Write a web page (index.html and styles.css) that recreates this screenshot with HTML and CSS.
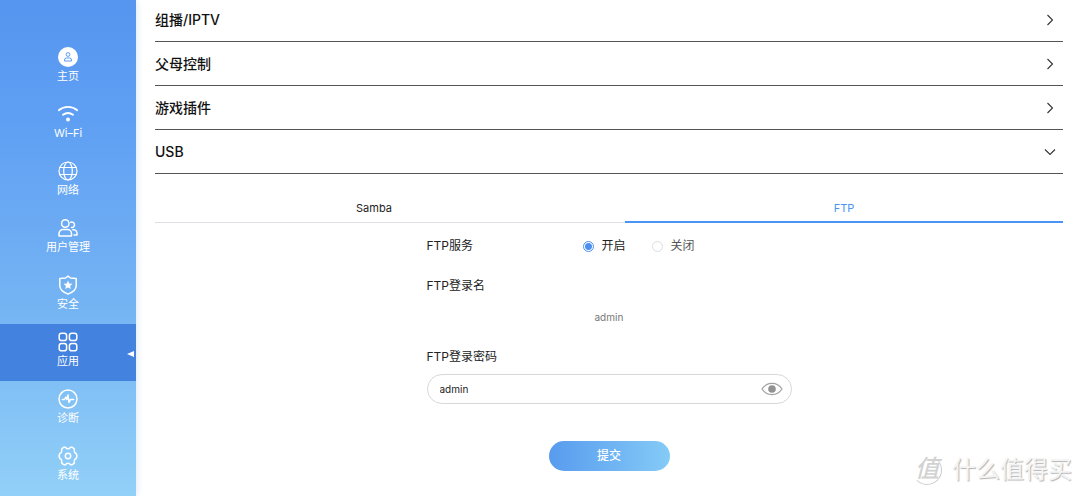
FILE: index.html
```html
<!DOCTYPE html>
<html lang="zh-CN">
<head>
<meta charset="utf-8">
<title>USB - FTP</title>
<link rel="stylesheet" href="styles.css">
</head>
<body>
<div class="layout">
  <nav class="sidebar">
    <a class="nav-item" href="#home">
      <svg class="nav-icon" viewBox="0 0 20 20"><circle cx="10" cy="10" r="10" fill="#fff"/><g fill="none" stroke="#5b9cf2" stroke-width="1"><circle cx="10" cy="7.500" r="1.900"/><path d="M6.500 14v-1a2 2 0 0 1 2-2h3a2 2 0 0 1 2 2v1z"/></g></svg>
      <span>主页</span>
    </a>
    <a class="nav-item" href="#wifi">
      <svg class="nav-icon" viewBox="0 0 20 20"><path d="M.8 6.200a14.500 14.500 0 0 1 18.400 0M5 10.800a8.500 8.500 0 0 1 10 0" fill="none" stroke="#fff" stroke-width="1.900" stroke-linecap="round"/><circle cx="10" cy="15.500" r="2" fill="#fff"/></svg>
      <span>Wi–Fi</span>
    </a>
    <a class="nav-item" href="#network">
      <svg class="nav-icon line" viewBox="0 0 20 20"><circle cx="10" cy="10" r="9"/><ellipse cx="10" cy="10" rx="4.300" ry="9"/><path d="M2 6.500h16M2 13.500h16" /></svg>
      <span>网络</span>
    </a>
    <a class="nav-item" href="#users">
      <svg class="nav-icon line thick" viewBox="0 0 20 20"><circle cx="7.300" cy="5.500" r="3.700"/><path d="M1 18v-2.500a4 4 0 0 1 4-4h4.500a4 4 0 0 1 4 4V18zM12.800 4.300a2.700 2.700 0 1 1 .8 5.200M14.800 11.700h.7a3.500 3.500 0 0 1 3.500 3.500V17h-3"/></svg>
      <span>用户管理</span>
    </a>
    <a class="nav-item" href="#security">
      <svg class="nav-icon line thick" viewBox="0 0 20 20"><path d="M10 1.200 12.500 3l5.700.6v7.200c0 4-4.200 6.800-8.200 8.300-4-1.500-8.200-4.300-8.200-8.300V3.600L7.500 3z"/><path d="m10 5.500 1.300 2.900 3.200.3-2.400 2.200.7 3.100-2.800-1.600L7.200 14l.7-3.100-2.400-2.200 3.200-.3z" fill="#fff" stroke="none"/></svg>
      <span>安全</span>
    </a>
    <a class="nav-item active" href="#apps" aria-current="page">
      <svg class="nav-icon line thick" viewBox="0 0 20 20"><rect x="1.200" y="1.200" width="7.400" height="7.400" rx="2.400"/><rect x="11.400" y="1.200" width="7.400" height="7.400" rx="2.400"/><rect x="1.200" y="11.400" width="7.400" height="7.400" rx="2.400"/><rect x="11.400" y="11.400" width="7.400" height="7.400" rx="2.400"/></svg>
      <span>应用</span>
    </a>
    <a class="nav-item" href="#diagnosis">
      <svg class="nav-icon line thick" viewBox="0 0 20 20"><circle cx="10" cy="10" r="9"/><path d="M4.300 10.500h2.200l1.300-2.300 1 2.300 1.200-4.500 1 7.500 1.400-3h3.300"/></svg>
      <span>诊断</span>
    </a>
    <a class="nav-item" href="#system">
      <svg class="nav-icon line thick" viewBox="0 0 20 20"><path d="M5.800 1.300h1.800a2.700 2.700 0 0 0 4.800 0h1.800l2 1.300.1 2.300a2.600 2.600 0 0 0 1.900 2.600l.8 2.500-.8 2.500a2.600 2.600 0 0 0-1.900 2.600l-.1 2.300-2 1.300h-1.800a2.700 2.700 0 0 0-4.800 0H5.800l-2-1.300-.1-2.300a2.600 2.600 0 0 0-1.900-2.600L1 10l.8-2.500a2.600 2.600 0 0 0 1.900-2.600l.1-2.300z"/><circle cx="10" cy="10" r="2.700"/></svg>
      <span>系统</span>
    </a>
  </nav>

  <main class="content">
    <div class="accordion">
      <button class="section" type="button" aria-expanded="false">组播/IPTV<svg class="chevron" viewBox="0 0 12 12"><path d="m3.500 1 5 5-5 5"/></svg></button>
      <button class="section" type="button" aria-expanded="false">父母控制<svg class="chevron" viewBox="0 0 12 12"><path d="m3.500 1 5 5-5 5"/></svg></button>
      <button class="section" type="button" aria-expanded="false">游戏插件<svg class="chevron" viewBox="0 0 12 12"><path d="m3.500 1 5 5-5 5"/></svg></button>
      <button class="section" type="button" aria-expanded="true">USB<svg class="chevron" viewBox="0 0 12 12"><path d="m1 3.500 5 5 5-5"/></svg></button>
    </div>

    <div class="tabs" role="tablist">
      <button class="tab" type="button" role="tab" aria-selected="false">Samba</button>
      <button class="tab selected" type="button" role="tab" aria-selected="true">FTP</button>
    </div>

    <form class="ftp-form">
      <div class="service" role="radiogroup" aria-labelledby="service-label">
        <span class="label" id="service-label">FTP服务</span>
        <label class="option"><input class="radio" type="radio" name="ftp" checked>开启</label>
        <label class="option off"><input class="radio" type="radio" name="ftp">关闭</label>
      </div>
      <div class="login">
        <span class="label">FTP登录名</span>
        <span class="login-name">admin</span>
      </div>
      <div class="password">
        <label class="label" for="ftp-password">FTP登录密码</label>
        <div class="field">
          <input class="field-input" id="ftp-password" type="text" value="admin">
          <button class="eye" type="button" aria-label="显示密码"><svg viewBox="0 0 22 14"><path d="M1 7c5-7.500 15-7.500 20 0-5 7.500-15 7.500-20 0z" fill="none" stroke="#a0a0a0" stroke-width="1.200"/><circle cx="11" cy="7" r="3.800" fill="#929292"/></svg></button>
        </div>
      </div>
      <button class="submit" type="submit">提交</button>
    </form>
  </main>
</div>
<div class="watermark"><span class="seal">值</span><span>什么值得买</span></div>
</body>
</html>
```
FILE: styles.css
```css
* {
  box-sizing: border-box;
}

body {
  margin: 0;
  background: #fff;
  color: #222;
  font: 12px/18px Inter, "Noto Sans CJK SC", sans-serif;
}

button,
input {
  margin: 0;
  padding: 0;
  border: 0;
  background: none;
  color: inherit;
  font: inherit;
}

.layout {
  display: flex;
  min-height: 100vh;
}

.sidebar {
  flex: 0 0 136px;
  padding-top: 39px;
  background: linear-gradient(#5595ef, #5f9ff3 24%, #75b4f3 62%, #92d0f8);
  box-shadow: 0 0 8px #d5e4f3;
}

.nav-item {
  position: relative;
  display: flex;
  flex-direction: column;
  align-items: center;
  gap: 1px;
  height: 57px;
  padding-top: 8px;
  color: #fff;
  font-size: 11px;
  line-height: 16px;
  text-decoration: none;
}

.nav-item.active {
  background: #4482df;
}

.nav-item.active::after {
  content: "";
  position: absolute;
  top: 27px;
  right: 2px;
  border: solid transparent;
  border-width: 3px 7px 3px 0;
  border-right-color: #fff;
}

.nav-icon {
  width: 20px;
  height: 20px;
}

.line {
  fill: none;
  stroke: #fff;
  stroke-width: 1.200;
  stroke-linejoin: round;
  stroke-linecap: round;
}

.thick {
  stroke-width: 1.500;
}

.content {
  flex: 1;
  padding: 0 17px 24px 19px;
}

.accordion {
  margin-top: -2px;
}

.section {
  display: flex;
  align-items: center;
  justify-content: space-between;
  width: 100%;
  height: 44px;
  padding-right: 7px;
  border-bottom: 1px solid #555;
  color: #111;
  font-size: 14px;
  font-weight: 500;
}

.chevron {
  width: 12px;
  height: 12px;
  fill: none;
  stroke: #333;
  stroke-width: 1.100;
}

.tabs {
  display: flex;
  gap: 32px;
  margin-top: 20px;
  box-shadow: inset 0 -1px #dcdfe6;
}

.tab {
  flex: 1;
  height: 29px;
  border-bottom: 2px solid transparent;
  color: #222;
  font-size: 11px;
}

.tab.selected {
  border-color: #4b93f5;
  color: #4b93f5;
}

.ftp-form {
  display: flex;
  flex-direction: column;
  width: 365px;
  max-width: 100%;
  margin: 14px auto 0;
}

.service {
  display: flex;
  align-items: center;
}

.service .label {
  width: 156px;
}

.option {
  display: flex;
  align-items: center;
  gap: 8px;
  margin-right: 26px;
}

.option.off {
  color: #555;
}

.radio {
  appearance: none;
  width: 11px;
  height: 11px;
  border: 1px solid #ddd;
  border-radius: 50%;
}

.radio:checked {
  border-color: #4b8ff0;
  background: radial-gradient(circle, #4b8ff0 3px, #fff 4px);
}

.login {
  display: flex;
  flex-direction: column;
  gap: 13px;
  margin-top: 22px;
}

.login-name {
  padding-left: 168px;
  color: #777;
  font-size: 10px;
}

.password {
  display: flex;
  flex-direction: column;
  gap: 8px;
  margin-top: 22px;
}

.field {
  display: flex;
  align-items: center;
  height: 30px;
  padding: 0 8px 0 12px;
  border: 1px solid #d8d8d8;
  border-radius: 15px;
}

.field-input {
  flex: 1;
  min-width: 0;
  font-size: 10px;
  outline: 0;
}

.eye {
  display: flex;
  width: 22px;
  height: 14px;
}

.submit {
  align-self: center;
  width: 121px;
  height: 30px;
  margin-top: 37px;
  border-radius: 15px;
  background: linear-gradient(90deg, #589bee, #84cbf7);
  color: #fff;
  font-weight: 500;
}

.watermark {
  position: absolute;
  right: 8px;
  bottom: 11px;
  display: flex;
  align-items: center;
  gap: 10px;
  color: #f4f4f4;
  font-size: 24px;
  line-height: 30px;
  text-shadow: 1px 1px 1px #b4b4b4;
  pointer-events: none;
}

.seal {
  width: 30px;
  height: 30px;
  border: 1px solid transparent;
  border-right-color: #ccc;
  border-bottom-color: #ccc;
  border-radius: 50%;
  color: #d2d2d2;
  font-style: italic;
  font-weight: 500;
  line-height: 26px;
  text-align: center;
  text-shadow: none;
}
```
